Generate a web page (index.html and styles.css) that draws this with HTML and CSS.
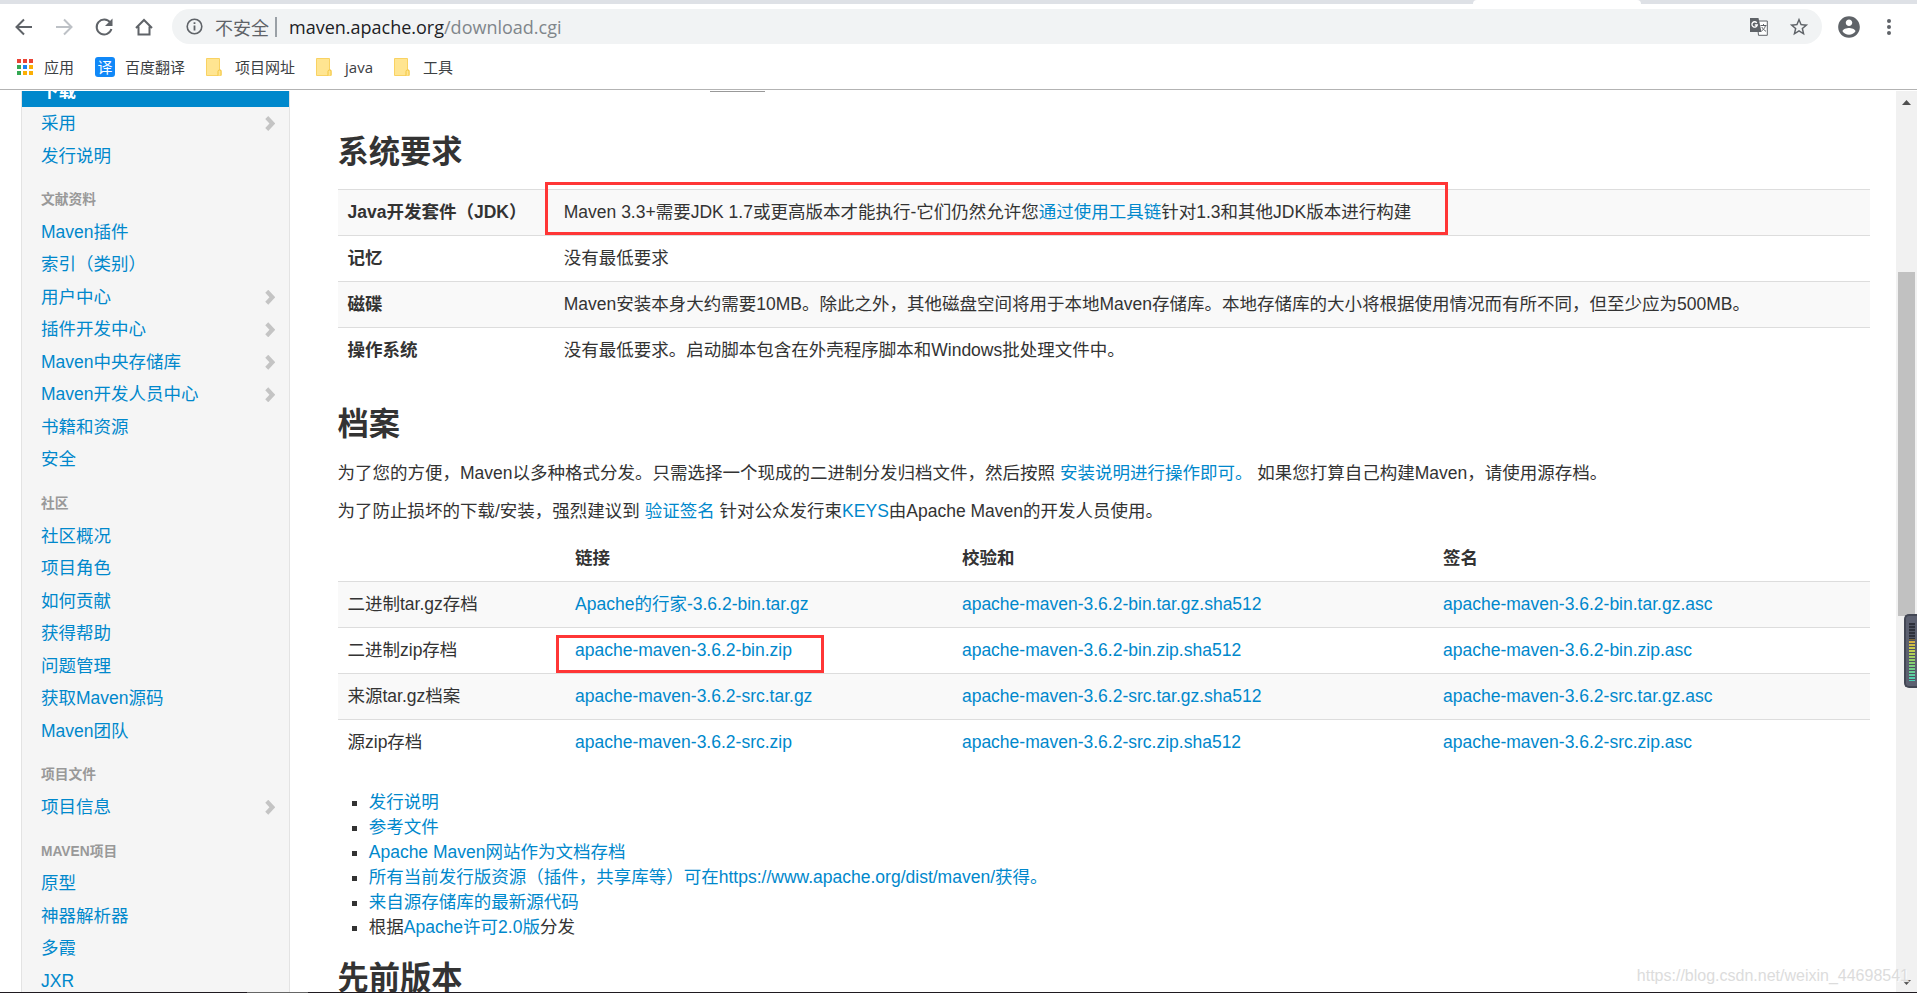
FILE: index.html
```html
<!DOCTYPE html>
<html lang="zh-CN">
<head>
<meta charset="utf-8">
<title>Maven – 下载 Apache Maven</title>
<link rel="stylesheet" href="styles.css">
</head>
<body>
<div class="window">
  <header class="chrome">
    <div class="tabstrip"><span class="tab-active"></span></div>
    <div class="toolbar">
      <button class="tool" type="button" aria-label="后退"><svg width="20" height="20" viewBox="0 0 20 20"><path d="M18 10H3M10 2.500 2.500 10 10 17.500" fill="none" stroke="#5f6368" stroke-width="2"/></svg></button>
      <button class="tool" type="button" aria-label="前进"><svg width="20" height="20" viewBox="0 0 20 20"><path d="M2 10H17M10 2.500 17.500 10 10 17.500" fill="none" stroke="#bdc1c6" stroke-width="2"/></svg></button>
      <button class="tool" type="button" aria-label="重新加载"><svg width="20" height="20" viewBox="0 0 20 20"><path d="M16.200 5.500A7.500 7.500 0 1 0 17.400 12" fill="none" stroke="#5f6368" stroke-width="2"/><path d="M18.500 1.500V9H11z" fill="#5f6368"/></svg></button>
      <button class="tool" type="button" aria-label="主页"><svg width="20" height="20" viewBox="0 0 20 20"><path d="M2 11 10 3l8 8M4.500 9.500v8h11v-8" fill="none" stroke="#5f6368" stroke-width="2"/></svg></button>
      <div class="omnibox">
        <svg width="17" height="17" viewBox="0 0 17 17"><circle cx="8.500" cy="8.500" r="7.300" fill="none" stroke="#5f6368" stroke-width="1.600"/><path d="M7.600 7.400h1.800v5H7.600zM7.600 4.300h1.800v1.800H7.600z" fill="#5f6368"/></svg>
        <span class="insecure">不安全</span>
        <span class="divider"></span>
        <span class="url">maven.apache.org<span class="path">/download.cgi</span></span>
        <svg class="translate" width="20" height="20" viewBox="0 0 20 20"><path d="M8 4h10.300v14.300H9.500z" fill="#fff" stroke="#5f6368"/><path d="M1 1h8.500l3 14H1z" fill="#5f6368"/><path d="M7.800 5.800A2.700 2.700 0 1 0 8.300 8H5.800" fill="none" stroke="#fff" stroke-width="1.300"/><path d="M11.500 8.500h6M14.500 7v1.500M16.500 8.500c-.6 2.500-2 4.200-4 5.500M12.800 10c1 2 2.500 3.300 4.200 4.300" fill="none" stroke="#5f6368"/></svg>
        <svg width="22" height="22" viewBox="0 0 24 24"><path d="M22 9.240l-7.190-.620L12 2 9.190 8.630 2 9.240l5.460 4.730L5.820 21 12 17.270 18.180 21l-1.630-7.030L22 9.240zM12 15.400l-3.760 2.270 1-4.280-3.320-2.880 4.380-.380L12 6.100l1.710 4.040 4.380.380-3.320 2.880 1 4.280L12 15.400z" fill="#5f6368"/></svg>
      </div>
      <button class="tool profile" type="button" aria-label="用户"><svg width="26" height="26" viewBox="0 0 24 24"><path d="M12 2C6.480 2 2 6.480 2 12s4.480 10 10 10 10-4.480 10-10S17.520 2 12 2zm0 3c1.660 0 3 1.340 3 3s-1.340 3-3 3-3-1.340-3-3 1.340-3 3-3zm0 14.200c-2.500 0-4.710-1.280-6-3.220.030-1.990 4-3.080 6-3.080 1.990 0 5.970 1.090 6 3.080-1.290 1.940-3.500 3.220-6 3.220z" fill="#5f6368"/></svg></button>
      <button class="tool" type="button" aria-label="菜单"><svg width="20" height="20" viewBox="0 0 20 20" fill="#5f6368"><circle cx="10" cy="4" r="2"/><circle cx="10" cy="10" r="2"/><circle cx="10" cy="16" r="2"/></svg></button>
    </div>
    <nav class="bookmarks">
      <a href="#"><svg width="18" height="18" viewBox="0 0 18 18"><path d="M1 1h4v4H1zM7 1h4v4H7zM13 1h4v4h-4z" fill="#ea4335"/><path d="M1 7h4v4H1zM1 13h4v4H1z" fill="#34a853"/><path d="M7 7h4v4H7z" fill="#1a82f0"/><path d="M13 7h4v4h-4zM7 13h4v4H7zM13 13h4v4h-4z" fill="#fbaf05"/></svg>应用</a>
      <a href="#"><span class="fanyi">译</span>百度翻译</a>
      <a href="#"><svg class="folder" width="16" height="20" viewBox="0 0 16 20"><path d="M.500 1.500h13v11.500h1.500v5.500H.500z" fill="#ffe591" stroke="#f9d262"/><path d="M12 18.500v-4q0-1.500 1.500-1.500t1.500 1.500v4" fill="#ffe591" stroke="#f3c63f"/></svg>项目网址</a>
      <a href="#"><svg class="folder" width="16" height="20" viewBox="0 0 16 20"><path d="M.500 1.500h13v11.500h1.500v5.500H.500z" fill="#ffe591" stroke="#f9d262"/><path d="M12 18.500v-4q0-1.500 1.500-1.500t1.500 1.500v4" fill="#ffe591" stroke="#f3c63f"/></svg>java</a>
      <a href="#"><svg class="folder" width="16" height="20" viewBox="0 0 16 20"><path d="M.500 1.500h13v11.500h1.500v5.500H.500z" fill="#ffe591" stroke="#f9d262"/><path d="M12 18.500v-4q0-1.500 1.500-1.500t1.500 1.500v4" fill="#ffe591" stroke="#f3c63f"/></svg>工具</a>
    </nav>
  </header>

  <div class="viewport">
    <div class="site">
      <nav class="sidebar">
        <ul>
          <li class="active"><a href="#">下载</a></li>
          <li class="more"><a href="#">采用</a></li>
          <li><a href="#">发行说明</a></li>
          <li class="nav-header">文献资料</li>
          <li><a href="#">Maven插件</a></li>
          <li><a href="#">索引（类别）</a></li>
          <li class="more"><a href="#">用户中心</a></li>
          <li class="more"><a href="#">插件开发中心</a></li>
          <li class="more"><a href="#">Maven中央存储库</a></li>
          <li class="more"><a href="#">Maven开发人员中心</a></li>
          <li><a href="#">书籍和资源</a></li>
          <li><a href="#">安全</a></li>
          <li class="nav-header">社区</li>
          <li><a href="#">社区概况</a></li>
          <li><a href="#">项目角色</a></li>
          <li><a href="#">如何贡献</a></li>
          <li><a href="#">获得帮助</a></li>
          <li><a href="#">问题管理</a></li>
          <li><a href="#">获取Maven源码</a></li>
          <li><a href="#">Maven团队</a></li>
          <li class="nav-header">项目文件</li>
          <li class="more"><a href="#">项目信息</a></li>
          <li class="nav-header">MAVEN项目</li>
          <li><a href="#">原型</a></li>
          <li><a href="#">神器解析器</a></li>
          <li><a href="#">多霞</a></li>
          <li><a href="#">JXR</a></li>
        </ul>
      </nav>
      <main class="content">
        <form class="mirror"><button type="button" aria-label="更改"></button></form>
        <h2>系统要求</h2>
        <table class="requirements">
          <tr><th scope="row">Java开发套件（JDK）</th><td class="marked">Maven 3.3+需要JDK 1.7或更高版本才能执行-它们仍然允许您<a href="#">通过使用工具链</a>针对1.3和其他JDK版本进行构建<span class="mark mark-jdk"></span></td></tr>
          <tr><th scope="row">记忆</th><td>没有最低要求</td></tr>
          <tr><th scope="row">磁碟</th><td>Maven安装本身大约需要10MB。除此之外，其他磁盘空间将用于本地Maven存储库。本地存储库的大小将根据使用情况而有所不同，但至少应为500MB。</td></tr>
          <tr><th scope="row">操作系统</th><td>没有最低要求。启动脚本包含在外壳程序脚本和Windows批处理文件中。</td></tr>
        </table>
        <h2>档案</h2>
        <p>为了您的方便，Maven以多种格式分发。只需选择一个现成的二进制分发归档文件，然后按照 <a href="#">安装说明进行操作即可。</a> 如果您打算自己构建Maven，请使用源存档。</p>
        <p>为了防止损坏的下载/安装，强烈建议到 <a href="#">验证签名</a> 针对公众发行束<a href="#">KEYS</a>由Apache Maven的开发人员使用。</p>
        <table class="files">
          <thead><tr><th></th><th scope="col">链接</th><th scope="col">校验和</th><th scope="col">签名</th></tr></thead>
          <tbody>
          <tr><td>二进制tar.gz存档</td><td><a href="#">Apache的行家-3.6.2-bin.tar.gz</a></td><td><a href="#">apache-maven-3.6.2-bin.tar.gz.sha512</a></td><td><a href="#">apache-maven-3.6.2-bin.tar.gz.asc</a></td></tr>
          <tr><td>二进制zip存档</td><td class="marked"><a href="#">apache-maven-3.6.2-bin.zip</a><span class="mark mark-zip"></span></td><td><a href="#">apache-maven-3.6.2-bin.zip.sha512</a></td><td><a href="#">apache-maven-3.6.2-bin.zip.asc</a></td></tr>
          <tr><td>来源tar.gz档案</td><td><a href="#">apache-maven-3.6.2-src.tar.gz</a></td><td><a href="#">apache-maven-3.6.2-src.tar.gz.sha512</a></td><td><a href="#">apache-maven-3.6.2-src.tar.gz.asc</a></td></tr>
          <tr><td>源zip存档</td><td><a href="#">apache-maven-3.6.2-src.zip</a></td><td><a href="#">apache-maven-3.6.2-src.zip.sha512</a></td><td><a href="#">apache-maven-3.6.2-src.zip.asc</a></td></tr>
          </tbody>
        </table>
        <ul class="links">
          <li><a href="#">发行说明</a></li>
          <li><a href="#">参考文件</a></li>
          <li><a href="#">Apache Maven网站作为文档存档</a></li>
          <li><a href="#">所有当前发行版资源（插件，共享库等）可在https://www.apache.org/dist/maven/获得。</a></li>
          <li><a href="#">来自源存储库的最新源代码</a></li>
          <li>根据<a href="#">Apache许可2.0版</a>分发</li>
        </ul>
        <h2>先前版本</h2>
      </main>
    </div>
    <div class="scrollbar">
      <svg width="21" height="21" viewBox="0 0 21 21"><path d="M6 14h9l-4.500-5z" fill="#505050"/></svg>
      <div class="track"><div class="thumb"></div></div>
      <svg width="21" height="21" viewBox="0 0 21 21"><path d="M6 9h9l-4.500 5z" fill="#505050"/></svg>
    </div>
    <div class="meter"><span class="bars"></span></div>
    <div class="watermark">https://blog.csdn.net/weixin_44698541</div>
  </div>
  <div class="taskbar"><span></span></div>
</div>
</body>
</html>
```

FILE: styles.css
```css
* { box-sizing: border-box; }
html, body { height: 100%; margin: 0; }
body { background: #fff; color: #333; font-family: "Liberation Sans", "Noto Sans CJK SC", sans-serif; overflow: hidden; }
a { color: #0088cc; text-decoration: none; }
svg { display: block; flex: none; }

.window { display: flex; flex-direction: column; height: 100%; }

/* browser frame */
.chrome { flex: none; border-bottom: 1px solid #b3b3b3; font-family: "Open Sans", "Noto Sans CJK SC", sans-serif; }
.tabstrip { height: 4px; background: #dee1e6; display: flex; justify-content: flex-end; padding-right: 276px; }
.tab-active { width: 168px; background: #fff; border-radius: 4px 4px 0 0; }
.toolbar { display: flex; align-items: center; height: 45px; padding: 0 18px 0 14px; gap: 20px; }
.tool { display: flex; align-items: center; justify-content: center; width: 20px; height: 20px; padding: 0; border: 0; background: none; flex: none; }
.profile { width: 26px; height: 26px; margin-right: -3px; }
.omnibox { flex: 1; display: flex; align-items: center; height: 35px; border-radius: 18px; background: #f1f3f4; padding: 0 12px 0 14px; margin: 0 -6px 0 -2px; }
.insecure { margin-left: 12px; font-size: 18px; color: #5f6368; }
.divider { width: 2px; height: 20px; margin: 0 12px 0 6px; background: #9aa0a6; }
.url { flex: 1; font-size: 18px; color: #202124; }
.path { color: #80868b; }
.translate { margin-right: 19px; }
.bookmarks { display: flex; align-items: center; gap: 21px; height: 40px; padding: 0 16px 4px; }
.bookmarks a { display: flex; align-items: center; gap: 10px; color: #3c4043; font-size: 15px; line-height: 20px; }
.folder { margin-right: 3px; }
.fanyi { width: 20px; height: 20px; border-radius: 3px; background: #1088f8; color: #fff; font-size: 15px; line-height: 20px; text-align: center; }

/* page area */
.viewport { flex: 1; min-height: 0; display: flex; position: relative; overflow: hidden; padding-top: 1px; }
.site { zoom: 1.25; flex: 1; min-width: 0; display: flex; overflow: hidden; padding: 0 21px 0 17px; gap: 38px; font-size: 14px; line-height: 20px; }

.sidebar { flex: none; width: 215px; margin-top: -13px; background: #f5f5f5; border: 1px solid #e3e3e3; border-top: 0; height: 800px; }
.sidebar ul { list-style: none; margin: 0; padding: 0; }
.sidebar a { display: block; padding: 3px 15px; }
.sidebar .active a { background: #0088cc; color: #fff; font-weight: bold; }
.nav-header { margin-top: 9px; padding: 3px 15px; font-size: 11px; font-weight: bold; color: #999; }
.sidebar .more a { display: flex; justify-content: space-between; align-items: center; padding-right: 11px; }
.more a::after { content: ""; width: 8px; height: 12px; background: #c4c4c4; clip-path: polygon(0 20%, 30% 0, 100% 50%, 30% 100%, 0 80%, 42% 50%); }

.content { flex: 1; min-width: 0; }
.mirror { margin: -18px 0 27px 298px; height: 19px; }
.mirror button { display: block; width: 44px; height: 19px; padding: 0; background: #ddd; border: 1px solid #999; }
h2 { margin: 10px 0; padding-top: 2px; font-size: 25px; line-height: 38px; }
p { margin: 0 0 10px; }
table { width: 100%; margin-bottom: 20px; border-collapse: collapse; table-layout: fixed; }
th, td { padding: 8px; text-align: left; vertical-align: top; border-top: 1px solid #ddd; }
thead th { border-top: 0; height: 36px; }
.requirements { margin-bottom: 21px; }
.requirements tr:nth-child(odd), .files tbody tr:nth-child(odd) { background: #f9f9f9; }
.requirements th { width: 173px; }
.files th:nth-child(1) { width: 14.85%; }
.files th:nth-child(2) { width: 25.25%; }
.files th:nth-child(3) { width: 31.4%; }
.marked { position: relative; }
.mark { position: absolute; border: 3px solid #ff3636; pointer-events: none; }
.mark-jdk { left: -7px; top: -6px; width: 722px; height: 42px; }
.mark-zip { left: -7px; top: 5px; width: 214px; height: 31px; }
.links { margin: 0 0 10px 25px; padding: 0; list-style: square; }

.scrollbar { flex: none; width: 21px; background: #f1f1f1; display: flex; flex-direction: column; }
.track { flex: 1; display: flex; flex-direction: column; padding: 0 2px; }
.thumb { height: 40%; margin-top: 160px; background: #c1c1c1; }
.meter { position: absolute; right: 0; top: 524px; width: 13px; height: 74px; border: 2px solid #434754; border-right: 0; border-radius: 5px 0 0 5px; background: #5c6070; padding: 7px 2px 0 3px; }
.bars { display: block; height: 58px; background: repeating-linear-gradient(transparent 0 2px, #4f5462 2px 3px), linear-gradient(#2e313b 0 28%, #dba93e 29%, #c9cf4c 45%, #8fd06a 65%, #49cfb8 100%); }
.watermark { position: absolute; right: 8px; bottom: 6px; font-size: 16px; line-height: 20px; color: #dcdcdc; text-shadow: 1px 1px 1px #fff; }
.taskbar { flex: none; height: 1px; background: #1f1a20; padding-left: 247px; }
.taskbar span { display: block; width: 61px; height: 1px; background: #666; }
```
